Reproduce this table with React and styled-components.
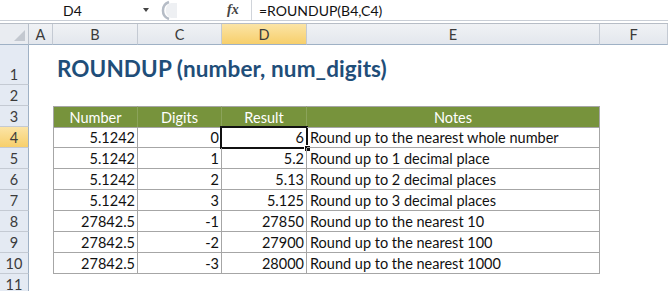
import styled, { createGlobalStyle } from 'styled-components'

const GlobalStyle = createGlobalStyle`
  body {
    margin: 0;
    background: #fff;
    font-family: Lato, "Open Sans", sans-serif;
    overflow: hidden;
  }
`

const columns = [
  { key: 'A', width: 24 },
  { key: 'B', width: 85 },
  { key: 'C', width: 84 },
  { key: 'D', width: 85 },
  { key: 'E', width: 293 },
  { key: 'F', width: 68 },
]

const tableRows = [
  ['5.1242', '0', '6', 'Round up to the nearest whole number'],
  ['5.1242', '1', '5.2', 'Round up to 1 decimal place'],
  ['5.1242', '2', '5.13', 'Round up to 2 decimal places'],
  ['5.1242', '3', '5.125', 'Round up to 3 decimal places'],
  ['27842.5', '-1', '27850', 'Round up to the nearest 10'],
  ['27842.5', '-2', '27900', 'Round up to the nearest 100'],
  ['27842.5', '-3', '28000', 'Round up to the nearest 1000'],
]

const headers = ['Number', 'Digits', 'Result', 'Notes']

// formula bar
const FormulaBar = styled.div`
  height: 20px;
  display: flex;
  align-items: center;
  border-bottom: 1px solid #c9ced6;
  font-size: 14px;
  color: #111;
`

const NameBox = styled.div`
  width: 143px;
  padding-left: 63px;
  box-sizing: border-box;
`

const DropArrow = styled.div`
  width: 0;
  height: 0;
  border-left: 3px solid transparent;
  border-right: 3px solid transparent;
  border-top: 4px solid #444;
  margin-right: 8px;
`

const Grip = styled.svg`
  width: 20px;
  height: 20px;
`

const FxButton = styled.div`
  margin-left: 50px;
  width: 18px;
  font-family: "Liberation Serif", serif;
  font-style: italic;
  font-weight: bold;
  font-size: 14px;
  color: #444;
  border-right: 1px solid #d0d4da;
  height: 20px;
  line-height: 20px;
  padding-right: 6px;
`

const FormulaText = styled.div`
  padding-left: 7px;
`

const Gap = styled.div`
  height: 2px;
  border-bottom: 1px solid #b7bdc6;
`

// sheet
const Sheet = styled.div`
  display: grid;
  grid-template-columns: 29px ${columns.map(c => c.width + 'px').join(' ')};
  grid-template-rows: 21px 40px repeat(10, 21px);
  font-size: 14.5px;
`

const Corner = styled.div`
  background: #e9ecf1;
  border-right: 1px solid #b9c1cc;
  border-bottom: 1px solid #9fb1c5;
  box-sizing: border-box;
  position: relative;

  &::after {
    content: '';
    position: absolute;
    right: 3px;
    bottom: 3px;
    width: 0;
    height: 0;
    border-left: 11px solid transparent;
    border-bottom: 11px solid #c3c8d0;
  }
`

const ColHeader = styled.div`
  display: flex;
  align-items: center;
  justify-content: center;
  box-sizing: border-box;
  border-right: 1px solid #c4cad3;
  border-bottom: 1px solid #9fb1c5;
  color: #3b3b3b;
  background: ${props => props.$active
    ? 'linear-gradient(#fbe4a6, #f7cf6b)'
    : 'linear-gradient(#f0f2f5, #e3e7ed)'};
`

const RowHeader = styled.div`
  display: flex;
  align-items: ${props => props.$tall ? 'flex-end' : 'center'};
  justify-content: center;
  padding-bottom: ${props => props.$tall ? '1px' : '0'};
  box-sizing: border-box;
  border-right: 1px solid #9fb1c5;
  border-bottom: 1px solid #c4cad3;
  color: #3b3b3b;
  background: ${props => props.$active
    ? 'linear-gradient(#fbe4a6, #f7cf6b)'
    : '#e4eaf3'};
`

const Cell = styled.div`
  box-sizing: border-box;
  display: flex;
  align-items: center;
  white-space: nowrap;
  color: #111;
  position: relative;
`

const Title = styled(Cell)`
  align-items: flex-end;
  padding: 0 0 3px 4px;
  font-size: 22.5px;
  letter-spacing: 0.1px;
  font-weight: bold;
  color: #1f4e79;
  z-index: 1;
`

const HeadCell = styled(Cell)`
  background: #77933c;
  color: #fff;
  justify-content: center;
  border-right: 1px solid ${props => props.$last ? '#a6a6a6' : '#8ba35a'};
  border-left: ${props => props.$first ? '1px solid #a6a6a6' : 'none'};
  border-top: 1px solid #a6a6a6;
  padding-top: 1px;
`

const DataCell = styled(Cell)`
  justify-content: ${props => props.$text ? 'flex-start' : 'flex-end'};
  padding: ${props => props.$text ? '0 0 0 3px' : '0 2px 0 0'};
  border-right: 1px solid #a6a6a6;
  border-bottom: 1px solid #a6a6a6;
  border-top: ${props => props.$top ? '1px solid #a6a6a6' : 'none'};
  border-left: ${props => props.$first ? '1px solid #a6a6a6' : 'none'};

  ${props => props.$selected && `
    &::before {
      content: '';
      position: absolute;
      left: -2px;
      top: -2px;
      right: -2px;
      bottom: -2px;
      border: 2px solid #111;
      pointer-events: none;
    }
    &::after {
      content: '';
      position: absolute;
      right: -5px;
      bottom: -5px;
      width: 5px;
      height: 5px;
      background: #111;
      border: 1px solid #fff;
    }
  `}
`

const App = () => {
  const rows = []

  for (let r = 1; r <= 11; r++) {
    const cells = [<RowHeader key={'h' + r} $active={r === 4} $tall={r === 1}>{r}</RowHeader>]
    columns.forEach(col => {
      const id = col.key + r
      const tableCol = ['B', 'C', 'D', 'E'].indexOf(col.key)
      if (r === 1 && col.key === 'B') {
        cells.push(<Title key={id}>ROUNDUP (number, num_digits)</Title>)
      } else if (r === 3 && tableCol >= 0) {
        cells.push(
          <HeadCell key={id} $first={tableCol === 0} $last={tableCol === 3}>
            {headers[tableCol]}
          </HeadCell>
        )
      } else if (r >= 4 && r <= 10 && tableCol >= 0) {
        cells.push(
          <DataCell
            key={id}
            $text={tableCol === 3}
            $first={tableCol === 0}
            $top={r === 4}
            $selected={id === 'D4'}
          >
            {tableRows[r - 4][tableCol]}
          </DataCell>
        )
      } else {
        cells.push(<Cell key={id} />)
      }
    })
    rows.push(cells)
  }

  return (
    <>
      <GlobalStyle />
      <FormulaBar>
        <NameBox>D4</NameBox>
        <DropArrow />
        <Grip viewBox="0 0 20 20">
          <path d="M12 2 A9 9 0 0 0 12 19" fill="none" stroke="#b5bcc6" strokeWidth="2.5" />
          <path d="M14 3 A8 8 0 0 0 14 18 L20 18 L20 3 Z" fill="#eef0f3" />
        </Grip>
        <FxButton>fx</FxButton>
        <FormulaText>=ROUNDUP(B4,C4)</FormulaText>
      </FormulaBar>
      <Gap />
      <Sheet>
        <Corner />
        {columns.map(col => (
          <ColHeader key={col.key} $active={col.key === 'D'}>{col.key}</ColHeader>
        ))}
        {rows}
      </Sheet>
    </>
  )
}

export default App
